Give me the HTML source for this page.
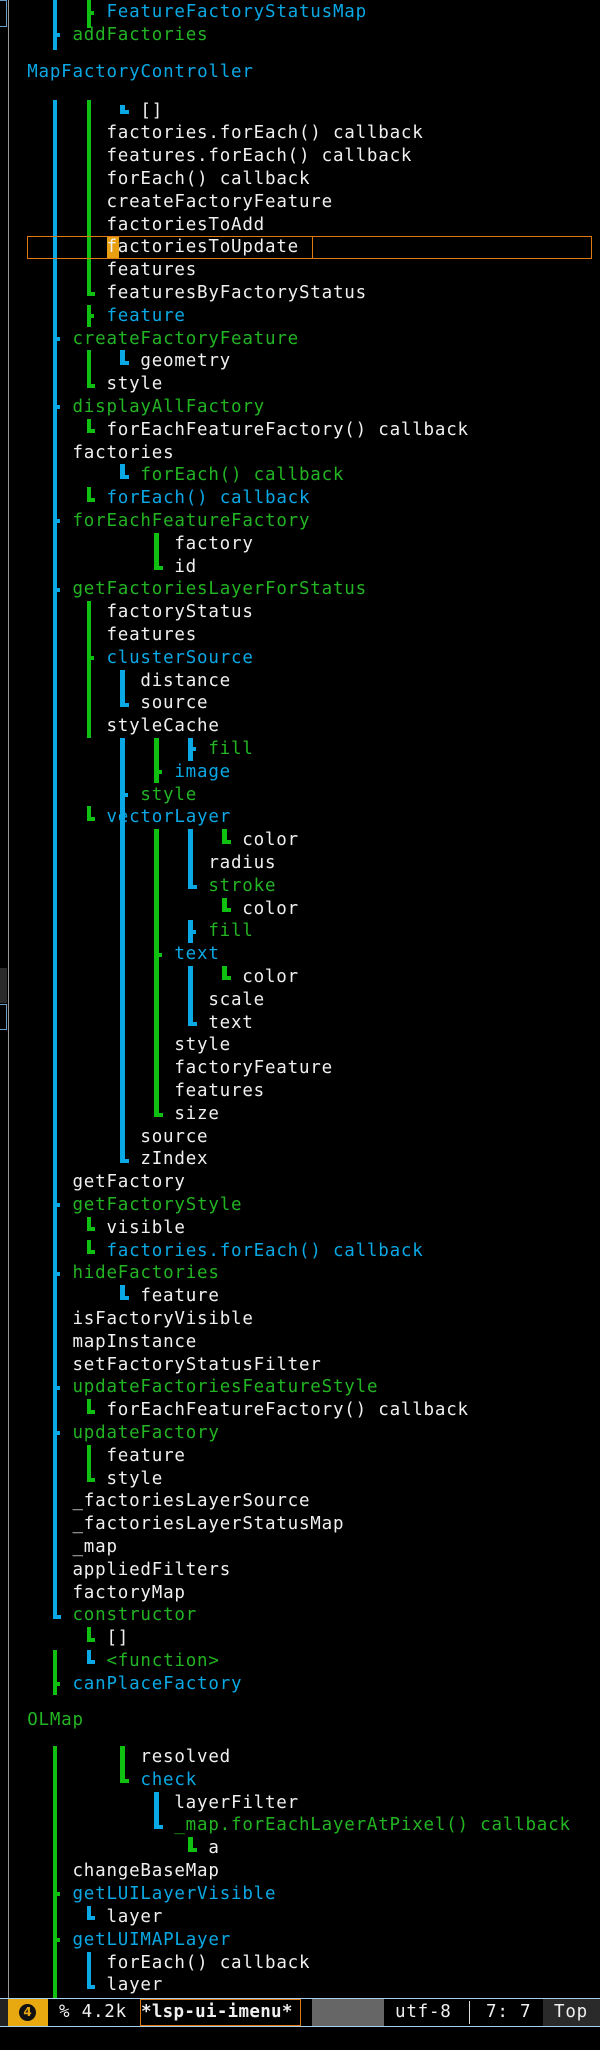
<!DOCTYPE html>
<html><head><meta charset="utf-8">
<style>
html,body{margin:0;padding:0;background:#000;}
body{width:600px;height:2050px;position:relative;overflow:hidden;}
.t{position:absolute;white-space:pre;font-family:"DejaVu Sans Mono","Liberation Mono",monospace;font-size:17.5px;letter-spacing:0.79px;line-height:22.8px;height:22.8px;color:#f0f0f0}
.b{color:#0aa8e4}.g{color:#22b422}
.bar{position:absolute}
</style></head><body>
<div style="position:absolute;left:8px;top:0;width:1px;height:1998px;background:#999"></div>
<div style="position:absolute;left:0;top:0;width:7px;height:27px;border:1px solid #6a9cc8;border-left:none;box-sizing:border-box"></div>
<div style="position:absolute;left:0;top:968px;width:7px;height:35px;background:#2a2a2a"></div>
<div style="position:absolute;left:0;top:1004px;width:7px;height:26px;border:1px solid #6a9cc8;border-left:none;box-sizing:border-box"></div>
<div id="bars"></div>
<div style="position:absolute;left:27px;top:236px;width:565px;height:23px;border:1px solid #e07a10;box-sizing:border-box"></div>
<div style="position:absolute;left:312px;top:236px;width:1px;height:23px;background:#e07a10"></div>
<div style="position:absolute;left:107px;top:237px;width:11.5px;height:21px;background:#e8a010"></div>
<div id="txt"></div>
<script>
var X=function(c){return 27.2+c*11.32;};
var lines=[
[12.7,7,'b','FeatureFactoryStatusMap'],[35,4,'g','addFactories'],[72,0,'b','MapFactoryController']
];
var B=407.3,P=22.8;
var s2=[
[-13,10,'','[]'],[-12,7,'','factories.forEach() callback'],[-11,7,'','features.forEach() callback'],[-10,7,'','forEach() callback'],[-9,7,'','createFactoryFeature'],[-8,7,'','factoriesToAdd'],[-7,7,'','factoriesToUpdate'],[-6,7,'','features'],[-5,7,'','featuresByFactoryStatus'],
[-4,7,'b','feature'],[-3,4,'g','createFactoryFeature'],[-2,10,'','geometry'],[-1,7,'','style'],
[0,4,'g','displayAllFactory'],[1,7,'','forEachFeatureFactory() callback'],[2,4,'','factories'],[3,10,'g','forEach() callback'],[4,7,'b','forEach() callback'],[5,4,'g','forEachFeatureFactory'],[6,13,'','factory'],[7,13,'','id'],[8,4,'g','getFactoriesLayerForStatus'],[9,7,'','factoryStatus'],[10,7,'','features'],[11,7,'b','clusterSource'],[12,10,'','distance'],[13,10,'','source'],[14,7,'','styleCache'],[15,16,'g','fill'],[16,13,'b','image'],[17,10,'g','style'],[18,7,'b','vectorLayer'],[19,19,'','color'],[20,16,'','radius'],[21,16,'g','stroke'],[22,19,'','color'],[23,16,'g','fill'],[24,13,'b','text'],[25,19,'','color'],[26,16,'','scale'],[27,16,'','text'],[28,13,'','style'],[29,13,'','factoryFeature'],[30,13,'','features'],[31,13,'','size'],[32,10,'','source'],[33,10,'','zIndex'],[34,4,'','getFactory'],[35,4,'g','getFactoryStyle'],[36,7,'','visible'],[37,7,'b','factories.forEach() callback'],[38,4,'g','hideFactories'],[39,10,'','feature'],[40,4,'','isFactoryVisible'],[41,4,'','mapInstance'],[42,4,'','setFactoryStatusFilter'],[43,4,'g','updateFactoriesFeatureStyle'],[44,7,'','forEachFeatureFactory() callback'],[45,4,'g','updateFactory'],[46,7,'','feature'],[47,7,'','style'],[48,4,'','_factoriesLayerSource'],[49,4,'','_factoriesLayerStatusMap'],[50,4,'','_map'],[51,4,'','appliedFilters'],[52,4,'','factoryMap'],[53,4,'g','constructor'],[54,7,'','[]'],[55,7,'g','<function>'],[56,4,'b','canPlaceFactory']
];
s2.forEach(function(r){lines.push([B+P*r[0],r[1],r[2],r[3]]);});
lines.push([1720,0,'g','OLMap']);
var B3=1757.3,P3=22.85;
[[0,10,'','resolved'],[1,10,'b','check'],[2,13,'','layerFilter'],[3,13,'g','_map.forEachLayerAtPixel() callback'],[4,16,'','a'],[5,4,'','changeBaseMap'],[6,4,'b','getLUILayerVisible'],[7,7,'','layer'],[8,4,'b','getLUIMAPLayer'],[9,7,'','forEach() callback'],[10,7,'','layer']].forEach(function(r){lines.push([B3+P3*r[0],r[1],r[2],r[3]]);});
var T=document.getElementById('txt');
lines.forEach(function(l){var d=document.createElement('div');d.className='t '+l[2];d.style.left=X(l[1])+'px';d.style.top=(l[0]-11.4)+'px';d.textContent=l[3];T.appendChild(d);});
var BL='#0aa8e4',GR='#10c010',BR=document.getElementById('bars');
function box(x,y,w,h,c){var d=document.createElement('div');d.className='bar';d.style.cssText='left:'+x+'px;top:'+y+'px;width:'+w+'px;height:'+h+'px;background:'+c;BR.appendChild(d);}
var BW=4.6;
function seg(col,c,a,b,end,tees,base,p){base=base||B;p=p||P;var x=X(col)+2.7;var top=base+p*a-p/2;var cb=base+p*b;var bot=end=='L'?cb+3:cb+p/2;box(x,top,BW,bot-top,c);if(end=='L')box(x,cb-1,8.5,4,c);(tees||[]).forEach(function(t){box(x+BW,base+p*t-2,3,4,c);});}
// top
box(X(5)+2.7,0,BW,28,GR);box(X(5)+2.7+BW,11,3,4,GR);
box(X(2)+2.7,0,BW,50,BL);box(X(2)+2.7+BW,33,3,4,BL);
// section 2
seg(2,BL,-13,53,'L',[-3,0,5,8,35,38,43,45]);
seg(5,GR,-13,-5,'L');seg(5,GR,-4,-4,'',[-4]);
box(X(8)+2.7,B-13*P-6,BW,9,BL);box(X(8)+2.7,B-13*P-1,8.5,4,BL);
seg(5,GR,-2,-1,'L');seg(8,BL,-2,-2,'L');
seg(5,GR,1,1,'L');seg(8,BL,3,3,'L');seg(5,GR,4,4,'L');
seg(11,GR,6,7,'L');
seg(5,GR,9,14,'',[11]);seg(8,BL,12,13,'L');
seg(8,BL,15,33,'L',[17]);seg(11,GR,15,16,'',[16]);seg(14,BL,15,15,'',[15]);
seg(5,GR,18,18,'L');
seg(11,GR,19,31,'L',[24]);seg(14,BL,19,21,'L');seg(17,GR,19,19,'L');seg(17,GR,22,22,'L');seg(14,BL,23,23,'',[23]);
seg(14,BL,25,27,'L');seg(17,GR,25,25,'L');
seg(5,GR,36,36,'L');seg(5,GR,37,37,'L');seg(8,BL,39,39,'L');seg(5,GR,44,44,'L');seg(5,GR,46,47,'L');
seg(5,GR,54,54,'L');seg(5,BL,55,55,'L');seg(2,GR,55,56,'',[56]);
// OLMap
box(X(2)+2.7,B3-11.4,BW,1998-(B3-11.4),GR);box(X(2)+2.7+BW,B3+P3*6-2,3,4,GR);box(X(2)+2.7+BW,B3+P3*8-2,3,4,GR);
seg(8,GR,0,1,'L',[],B3,P3);seg(11,BL,2,3,'L',[],B3,P3);seg(14,GR,4,4,'L',[],B3,P3);seg(5,BL,7,7,'L',[],B3,P3);seg(5,BL,9,10,'L',[],B3,P3);
</script>
<!-- mode line -->
<div style="position:absolute;left:0;top:1998px;width:600px;height:29px;background:#000;border-top:1px solid #a8d0ec;border-bottom:1px solid #a8d0ec;box-sizing:border-box"></div>
<div style="position:absolute;left:0;top:1999px;width:8px;height:27px;background:#222"></div>
<div style="position:absolute;left:8px;top:1999px;width:40px;height:27px;background:#e8a810"></div>
<div style="position:absolute;left:19px;top:2004px;width:17px;height:17px;border-radius:50%;background:#111;color:#e8a810;font:bold 12px/17px 'DejaVu Sans',sans-serif;text-align:center">4</div>
<div class="t" style="left:59px;top:2001px">% 4.2k</div>
<div style="position:absolute;left:140px;top:1999px;width:161px;height:27px;border:1px solid #e07a10;box-sizing:border-box"></div>
<div class="t" style="left:141px;top:2001px;font-weight:bold;letter-spacing:0.3px">*lsp-ui-imenu*</div>
<div style="position:absolute;left:312px;top:1999px;width:72px;height:27px;background:#666"></div>
<div class="t" style="left:395px;top:2001px">utf-8</div>
<div style="position:absolute;left:469px;top:2001px;width:1px;height:23px;background:#ddd"></div>
<div class="t" style="left:486px;top:2001px">7: 7</div>
<div style="position:absolute;left:543px;top:1999px;width:57px;height:27px;background:#2a2a2a"></div>
<div class="t" style="left:554px;top:2001px">Top</div>
</body></html>
